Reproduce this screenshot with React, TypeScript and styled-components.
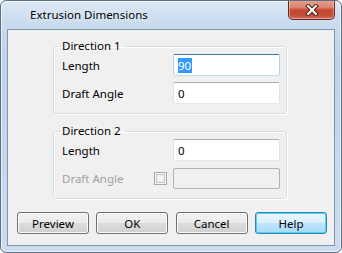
import styled, { createGlobalStyle, css } from 'styled-components';

const GlobalStyle = createGlobalStyle`
  html, body {
    margin: 0;
    padding: 0;
    background: #ffffff;
  }
  * {
    box-sizing: border-box;
  }
`;

const Window = styled.div`
  width: 342px;
  height: 253px;
  border: 1px solid #5f6f82;
  border-radius: 6px;
  background: linear-gradient(
    to bottom,
    #dce8f5 0px,
    #cadcef 20px,
    #bdd3ea 60px,
    #c4d8ee 160px,
    #cbdcef 100%
  );
  box-shadow: inset 0 0 0 1px rgba(255, 255, 255, 0.6);
  display: flex;
  flex-direction: column;
  overflow: hidden;
  font-family: 'Noto Sans', 'Open Sans', sans-serif;
  font-size: 11.5px;
  color: #000;
`;

const TitleBar = styled.div`
  height: 28px;
  display: flex;
  align-items: flex-start;
  padding-left: 29px;
  padding-right: 6px;
`;

const Title = styled.span`
  line-height: 28px;
  color: #000;
  text-shadow: 0 0 6px rgba(255, 255, 255, 0.9);
`;

const CloseButton = styled.button`
  margin-left: auto;
  margin-top: -1px;
  width: 47px;
  height: 20px;
  padding: 0;
  border: 1px solid #6b2a21;
  border-top: none;
  border-radius: 0 0 5px 5px;
  background: linear-gradient(
    to bottom,
    #e8a493 0%,
    #d98270 40%,
    #c7482f 52%,
    #c44c36 80%,
    #d6735e 100%
  );
  box-shadow: inset 0 0 0 1px rgba(255, 255, 255, 0.35);
  display: flex;
  align-items: center;
  justify-content: center;
`;

const ClientArea = styled.div`
  flex: 1;
  margin: 0 6px 6px 6px;
  border: 1px solid #8195ac;
  background: #f0f0f0;
  display: flex;
  flex-direction: column;
  padding-top: 9px;
`;

const GroupBox = styled.fieldset<{ $gap?: number }>`
  margin: 0 0 0 45px;
  margin-top: ${({ $gap }) => $gap ?? 0}px;
  padding: 1px 6px 9px 8px;
  width: 234px;
  min-inline-size: 0;
  border: 1px solid #d5dfe5;
  border-radius: 3px;
  box-shadow: inset 1px 1px 0 #ffffff, 1px 1px 0 #ffffff;
  display: grid;
  grid-template-columns: 92px 19px 107px;
  grid-auto-rows: 22px;
  row-gap: 6px;
  align-items: center;
`;

const Legend = styled.legend`
  margin-left: -2px;
  padding: 0 3px 0 2px;
  line-height: 14px;
  color: #000;
`;

const Label = styled.span<{ $disabled?: boolean; $wide?: boolean }>`
  grid-column: ${({ $wide }) => ($wide ? 'span 2' : 'span 1')};
  color: ${({ $disabled }) => ($disabled ? '#a0a0a0' : '#000')};
  white-space: nowrap;
`;

const TextField = styled.div<{ $focused?: boolean; $disabled?: boolean }>`
  grid-column: 3;
  height: 22px;
  border: 1px solid #e2e3ea;
  border-top-color: #abadb3;
  border-bottom-color: #e3e9ef;
  border-radius: 2px;
  background: #ffffff;
  padding-left: 4px;
  display: flex;
  align-items: center;
  ${({ $focused }) =>
    $focused &&
    css`
      border-color: #b5cfe7;
      border-top-color: #3d7bad;
      border-bottom-color: #c5daed;
    `}
  ${({ $disabled }) =>
    $disabled &&
    css`
      height: 21px;
      border-color: #adb2b5;
      background: #f0f0f0;
    `}
`;

const Selected = styled.span`
  background: #3399ff;
  color: #ffffff;
  line-height: 15px;
  padding-right: 1px;
`;

const CheckBox = styled.span`
  width: 13px;
  height: 13px;
  border: 1px solid #a9a9a9;
  background: radial-gradient(circle at 50% 45%, #fbfbfb 0%, #e8e8e8 55%, #cdcdcd 100%);
  box-shadow: inset 0 0 0 1px #f4f4f4, inset 0 0 0 2px #c9c9c9;
`;

const ButtonRow = styled.div`
  margin-top: 13px;
  padding: 0 7px 0 9px;
  display: flex;
  justify-content: space-between;
`;

const Button = styled.button<{ $default?: boolean }>`
  width: 72px;
  height: 22px;
  padding: 0;
  font-family: inherit;
  font-size: 11.5px;
  color: #000;
  border: 1px solid #707070;
  border-radius: 3px;
  background: linear-gradient(
    to bottom,
    #f2f2f2 0%,
    #ebebeb 49%,
    #dddddd 50%,
    #cfcfcf 100%
  );
  box-shadow: inset 0 0 0 1px #fcfcfc;
  ${({ $default }) =>
    $default &&
    css`
      border-color: #3c7fb1;
      background: linear-gradient(
        to bottom,
        #eaf6fd 0%,
        #d9f0fc 49%,
        #bee6fd 50%,
        #a7d9f5 100%
      );
      box-shadow: inset 0 0 0 1px #48d4fc;
    `}
`;

const CloseIcon = () => (
  <svg width="14" height="12" viewBox="0 0 14 12">
    <path d="M3 2 L11 10 M11 2 L3 10" stroke="#4a1f18" strokeWidth="4" strokeLinecap="square" />
    <path d="M3 2 L11 10 M11 2 L3 10" stroke="#ffffff" strokeWidth="2" strokeLinecap="square" />
  </svg>
);

export default function App() {
  return (
    <>
      <GlobalStyle />
      <Window>
        <TitleBar>
          <Title>Extrusion Dimensions</Title>
          <CloseButton aria-label="Close">
            <CloseIcon />
          </CloseButton>
        </TitleBar>
        <ClientArea>
          <GroupBox>
            <Legend>Direction 1</Legend>
            <Label $wide>Length</Label>
            <TextField $focused>
              <Selected>90</Selected>
            </TextField>
            <Label $wide>Draft Angle</Label>
            <TextField>0</TextField>
          </GroupBox>
          <GroupBox $gap={10}>
            <Legend>Direction 2</Legend>
            <Label $wide>Length</Label>
            <TextField>0</TextField>
            <Label $disabled>Draft Angle</Label>
            <CheckBox />
            <TextField $disabled />
          </GroupBox>
          <ButtonRow>
            <Button>Preview</Button>
            <Button>OK</Button>
            <Button>Cancel</Button>
            <Button $default>Help</Button>
          </ButtonRow>
        </ClientArea>
      </Window>
    </>
  );
}
